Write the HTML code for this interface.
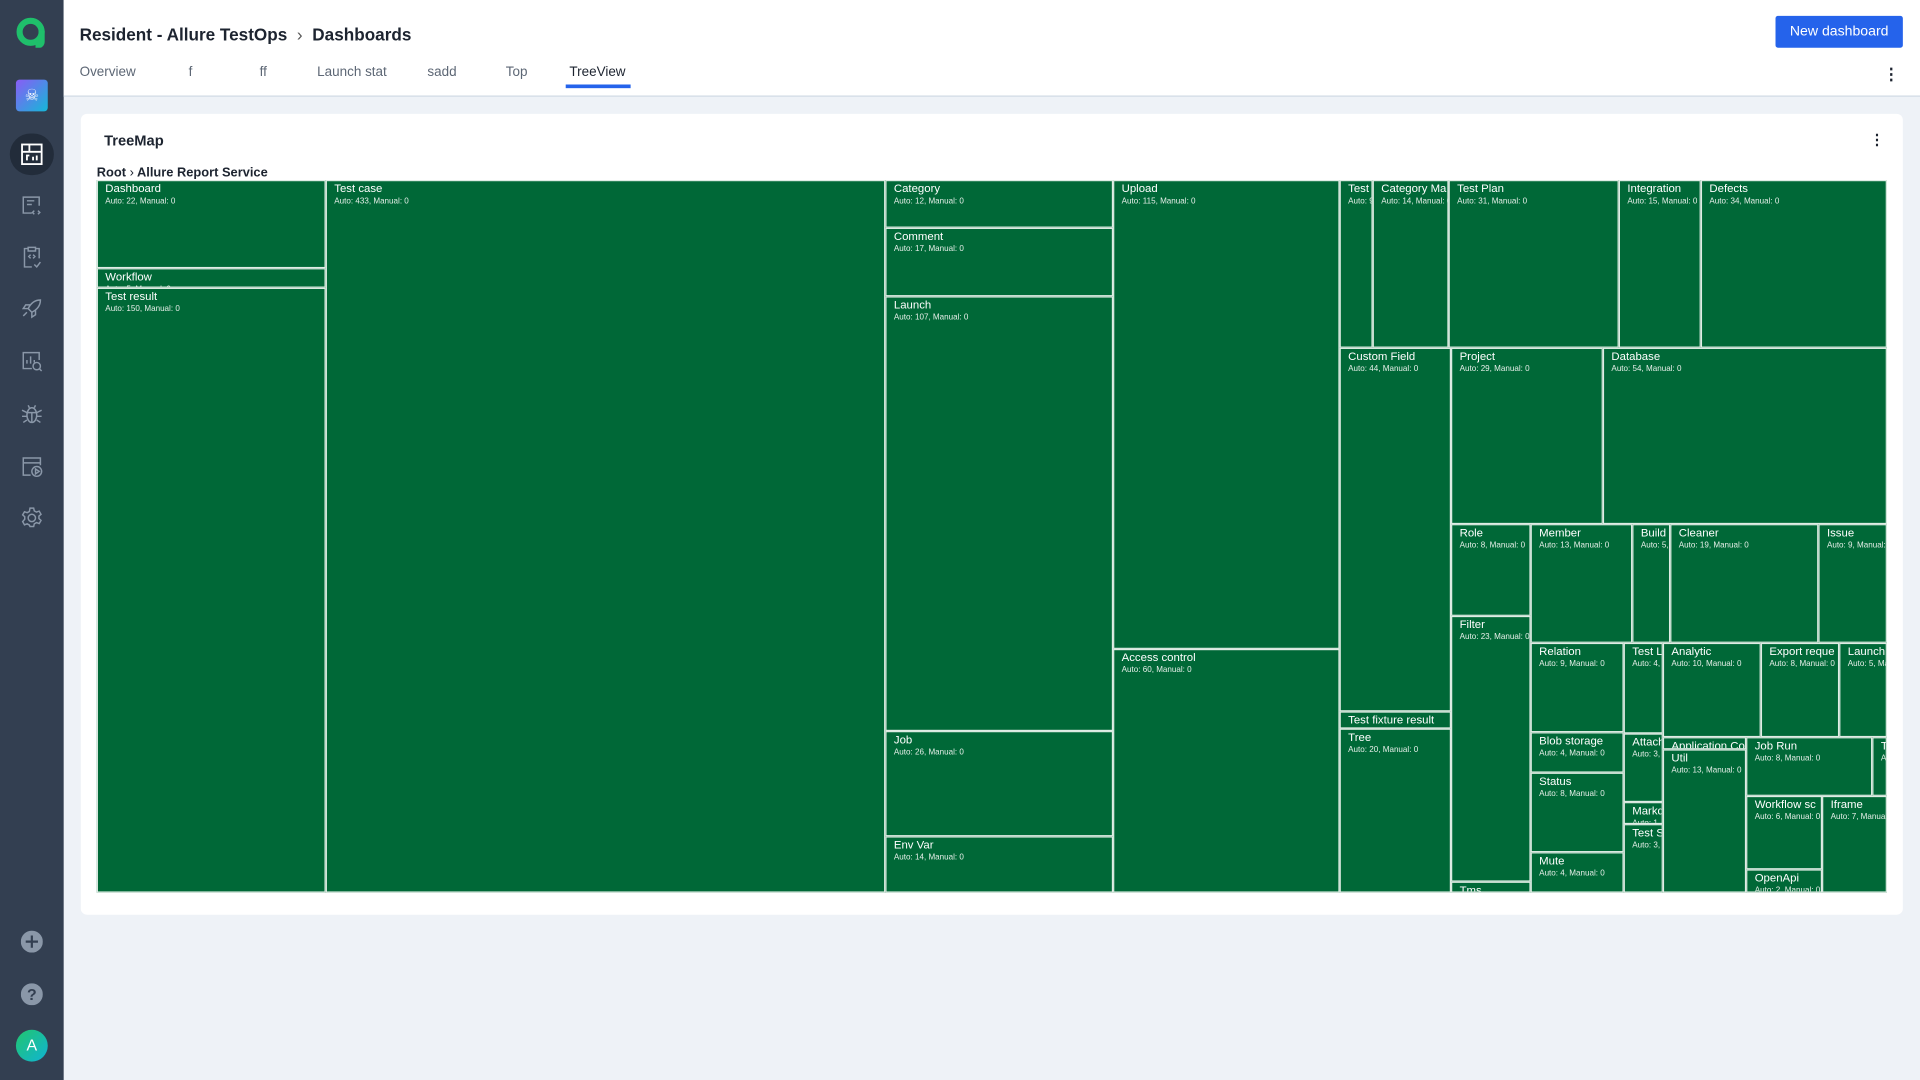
<!DOCTYPE html>
<html><head><meta charset="utf-8"><style>
html,body{margin:0;padding:0;width:1920px;height:1080px;overflow:hidden;background:#eef2f7;font-family:"Liberation Sans",sans-serif}
#root{position:absolute;left:0;top:0;width:1568px;height:882px;transform:scale(1.22449);transform-origin:0 0}
.sb{position:absolute;left:0;top:0;width:52px;height:882px;background:#333f51}
.hdr{position:absolute;left:52px;top:0;width:1516px;height:78px;background:#fff;border-bottom:1px solid #cfd8e3}
.ic{position:absolute;left:16px;width:20px;height:20px}
.r{position:absolute;background:#006837;border:0.85px solid #dfece4;box-sizing:border-box;overflow:hidden;color:#fff;white-space:nowrap;padding:1px 0 0 6px}
.r b{display:block;font-weight:normal;font-size:9.3px;line-height:11px}
.r i{display:block;font-style:normal;font-size:6.6px;line-height:9px;color:#e6efe9}
.tab{position:absolute;top:53px;font-size:11px;color:#5d6775}
</style></head><body><div id="root">
<div class="sb">
 <svg style="position:absolute;left:13px;top:13px" width="26" height="26" viewBox="0 0 26 26"><circle cx="12" cy="13" r="9" fill="none" stroke="#1fbf6b" stroke-width="5"/><path d="M21 12v9a3 3 0 0 1-3 3h-2" fill="none" stroke="#1fbf6b" stroke-width="5"/></svg>
 <div style="position:absolute;left:13px;top:65px;width:26px;height:26px;border-radius:3px;background:linear-gradient(135deg,#8a5cf6,#14b8d8);color:#fff;font-size:13px;text-align:center;line-height:26px">☠</div>
 <div style="position:absolute;left:8px;top:109px;width:36px;height:34px;border-radius:17px;background:#222c3a"></div>
 <svg class="ic" style="top:116px" viewBox="0 0 20 20" fill="none" stroke="#fff" stroke-width="1.5"><rect x="2" y="2" width="16" height="16"/><path d="M2 8h16M8 2v6M6 15v-4h2M11 15v-3M14 15v-4"/></svg>
 <svg class="ic" style="top:158px" viewBox="0 0 20 20" fill="none" stroke="#8a97a8" stroke-width="1.2"><path d="M16 10V3H3v13h7M6 6h6M6 9h4M12 14l-1.5 1.5L12 17M15 14l1.5 1.5L15 17"/></svg>
 <svg class="ic" style="top:200px" viewBox="0 0 20 20" fill="none" stroke="#8a97a8" stroke-width="1.2"><path d="M7 3H4v15h6M13 3h3v8M7 2h6v3H7zM9 8l-1.5 1.5L9 11M11 8l1.5 1.5L11 11M12 16l2 2 3-4"/></svg>
 <svg class="ic" style="top:242px" viewBox="0 0 20 20" fill="none" stroke="#8a97a8" stroke-width="1.2"><path d="M17 3c-5 0-8 3-10 7l3 3c4-2 7-5 7-10zM7 10H3l2-3h4M10 13v4l3-2v-4M3 16l3-3"/></svg>
 <svg class="ic" style="top:285px" viewBox="0 0 20 20" fill="none" stroke="#8a97a8" stroke-width="1.2"><path d="M16 9V3H3v13h7M6 12V9M9 12V6M12 9v2"/><circle cx="14" cy="14" r="3"/><path d="M16 16l2 2"/></svg>
 <svg class="ic" style="top:328px" viewBox="0 0 20 20" fill="none" stroke="#8a97a8" stroke-width="1.2"><ellipse cx="10" cy="11" rx="4" ry="6"/><path d="M6 9h8M10 9v8M2 7l4 2M18 7l-4 2M2 12h4M18 12h-4M3 17l3-2M17 17l-3-2M8 5l-1-2M12 5l1-2"/></svg>
 <svg class="ic" style="top:371px" viewBox="0 0 20 20" fill="none" stroke="#8a97a8" stroke-width="1.2"><path d="M9 17H3V3h14v6M3 7h14"/><circle cx="14" cy="14" r="4"/><path d="M13 12v4l3-2z"/></svg>
 <svg class="ic" style="top:413px" viewBox="0 0 20 20" fill="none" stroke="#8a97a8" stroke-width="1.2"><circle cx="10" cy="10" r="3"/><path d="M8.5 2h3l.5 2.2 1.8 1 2.2-.8 1.5 2.6-1.7 1.5v2l1.7 1.5-1.5 2.6-2.2-.8-1.8 1-.5 2.2h-3L8 15.8l-1.8-1-2.2.8-1.5-2.6L4.2 11V9L2.5 7.5 4 4.9l2.2.8 1.8-1z"/></svg>
 <svg class="ic" style="top:760px;left:17px;width:18px;height:18px" viewBox="0 0 18 18"><circle cx="9" cy="9" r="9" fill="#8a97a8"/><path d="M9 4v10M4 9h10" stroke="#333f51" stroke-width="1.8"/></svg>
 <svg class="ic" style="top:803px;left:17px;width:18px;height:18px" viewBox="0 0 18 18"><circle cx="9" cy="9" r="9" fill="#8a97a8"/><text x="9" y="13.5" text-anchor="middle" font-size="13" font-weight="bold" fill="#333f51" font-family="Liberation Sans">?</text></svg>
 <div style="position:absolute;left:13px;top:841px;width:26px;height:26px;border-radius:13px;background:linear-gradient(135deg,#22c56e,#10b4d4);color:#fff;font-size:13px;text-align:center;line-height:26px">A</div>
</div>
<div class="hdr">
 <div style="position:absolute;left:13px;top:20px;font-size:14px;font-weight:bold;color:#1d2430">Resident - Allure TestOps <span style="font-weight:normal;color:#555;margin:0 4px">›</span> Dashboards</div>
 <div style="position:absolute;left:1398px;top:13px;width:104px;height:26px;background:#2563eb;border-radius:2px;color:#fff;font-size:11.5px;text-align:center;line-height:26px">New dashboard</div>
 <div style="position:absolute;left:1486px;top:58px;font-size:13px;line-height:5px;color:#1d2430;font-weight:bold">⋮</div>
</div>
<div class="tab" style="left:65px">Overview</div>
<div class="tab" style="left:154px">f</div>
<div class="tab" style="left:212px">ff</div>
<div class="tab" style="left:259px">Launch stat</div>
<div class="tab" style="left:349px">sadd</div>
<div class="tab" style="left:413px">Top</div>
<div class="tab" style="left:465px;color:#1d2430">TreeView</div>
<div style="position:absolute;left:462px;top:69px;width:53px;height:3px;background:#2563eb"></div>
<div style="position:absolute;left:66px;top:93px;width:1488px;height:654px;background:#fff;border-radius:5px"></div>
<div style="position:absolute;left:85px;top:108px;font-size:12px;font-weight:bold;color:#1d2430">TreeMap</div>
<div style="position:absolute;left:1527px;top:112px;font-size:12px;line-height:5px;color:#1d2430;font-weight:bold">⋮</div>
<div style="position:absolute;left:79px;top:135px;font-size:10.5px;font-weight:bold;color:#1d2430">Root <span style="font-weight:normal">›</span> Allure Report Service</div>
<div class="r" style="left:79px;top:147px;width:187px;height:72px"><b>Dashboard</b><i>Auto: 22, Manual: 0</i></div>
<div class="r" style="left:79px;top:219px;width:187px;height:16px"><b>Workflow</b><i>Auto: 5, Manual: 0</i></div>
<div class="r" style="left:79px;top:235px;width:187px;height:494px"><b>Test result</b><i>Auto: 150, Manual: 0</i></div>
<div class="r" style="left:266px;top:147px;width:457px;height:582px"><b>Test case</b><i>Auto: 433, Manual: 0</i></div>
<div class="r" style="left:723px;top:147px;width:186px;height:39px"><b>Category</b><i>Auto: 12, Manual: 0</i></div>
<div class="r" style="left:723px;top:186px;width:186px;height:56px"><b>Comment</b><i>Auto: 17, Manual: 0</i></div>
<div class="r" style="left:723px;top:242px;width:186px;height:355px"><b>Launch</b><i>Auto: 107, Manual: 0</i></div>
<div class="r" style="left:723px;top:597px;width:186px;height:86px"><b>Job</b><i>Auto: 26, Manual: 0</i></div>
<div class="r" style="left:723px;top:683px;width:186px;height:46px"><b>Env Var</b><i>Auto: 14, Manual: 0</i></div>
<div class="r" style="left:909px;top:147px;width:185px;height:383px"><b>Upload</b><i>Auto: 115, Manual: 0</i></div>
<div class="r" style="left:909px;top:530px;width:185px;height:199px"><b>Access control</b><i>Auto: 60, Manual: 0</i></div>
<div class="r" style="left:1094px;top:147px;width:27px;height:137px"><b>Test</b><i>Auto: 9, Manual: 0</i></div>
<div class="r" style="left:1121px;top:147px;width:62px;height:137px"><b>Category Ma</b><i>Auto: 14, Manual: 0</i></div>
<div class="r" style="left:1183px;top:147px;width:139px;height:137px"><b>Test Plan</b><i>Auto: 31, Manual: 0</i></div>
<div class="r" style="left:1322px;top:147px;width:67px;height:137px"><b>Integration</b><i>Auto: 15, Manual: 0</i></div>
<div class="r" style="left:1389px;top:147px;width:152px;height:137px"><b>Defects</b><i>Auto: 34, Manual: 0</i></div>
<div class="r" style="left:1094px;top:284px;width:91px;height:297px"><b>Custom Field</b><i>Auto: 44, Manual: 0</i></div>
<div class="r" style="left:1094px;top:581px;width:91px;height:14px"><b>Test fixture result</b></div>
<div class="r" style="left:1094px;top:595px;width:91px;height:134px"><b>Tree</b><i>Auto: 20, Manual: 0</i></div>
<div class="r" style="left:1185px;top:284px;width:124px;height:144px"><b>Project</b><i>Auto: 29, Manual: 0</i></div>
<div class="r" style="left:1309px;top:284px;width:232px;height:144px"><b>Database</b><i>Auto: 54, Manual: 0</i></div>
<div class="r" style="left:1185px;top:428px;width:65px;height:75px"><b>Role</b><i>Auto: 8, Manual: 0</i></div>
<div class="r" style="left:1185px;top:503px;width:65px;height:217px"><b>Filter</b><i>Auto: 23, Manual: 0</i></div>
<div class="r" style="left:1185px;top:720px;width:65px;height:9px"><b>Tms</b></div>
<div class="r" style="left:1250px;top:428px;width:83px;height:97px"><b>Member</b><i>Auto: 13, Manual: 0</i></div>
<div class="r" style="left:1333px;top:428px;width:31px;height:97px"><b>Build</b><i>Auto: 5, Manual: 0</i></div>
<div class="r" style="left:1364px;top:428px;width:121px;height:97px"><b>Cleaner</b><i>Auto: 19, Manual: 0</i></div>
<div class="r" style="left:1485px;top:428px;width:56px;height:97px"><b>Issue</b><i>Auto: 9, Manual: 0</i></div>
<div class="r" style="left:1250px;top:525px;width:76px;height:73px"><b>Relation</b><i>Auto: 9, Manual: 0</i></div>
<div class="r" style="left:1250px;top:598px;width:76px;height:33px"><b>Blob storage</b><i>Auto: 4, Manual: 0</i></div>
<div class="r" style="left:1250px;top:631px;width:76px;height:65px"><b>Status</b><i>Auto: 8, Manual: 0</i></div>
<div class="r" style="left:1250px;top:696px;width:76px;height:33px"><b>Mute</b><i>Auto: 4, Manual: 0</i></div>
<div class="r" style="left:1326px;top:525px;width:32px;height:74px"><b>Test L</b><i>Auto: 4, Manual: 0</i></div>
<div class="r" style="left:1326px;top:599px;width:32px;height:56px"><b>Attach</b><i>Auto: 3, Manual: 0</i></div>
<div class="r" style="left:1326px;top:655px;width:32px;height:18px"><b>Markd</b><i>Auto: 1, Manual: 0</i></div>
<div class="r" style="left:1326px;top:673px;width:32px;height:56px"><b>Test S</b><i>Auto: 3, Manual: 0</i></div>
<div class="r" style="left:1358px;top:525px;width:80px;height:77px"><b>Analytic</b><i>Auto: 10, Manual: 0</i></div>
<div class="r" style="left:1438px;top:525px;width:64px;height:77px"><b>Export reque</b><i>Auto: 8, Manual: 0</i></div>
<div class="r" style="left:1502px;top:525px;width:39px;height:77px"><b>Launch</b><i>Auto: 5, Manual: 0</i></div>
<div class="r" style="left:1358px;top:602px;width:68px;height:10px"><b>Application Co</b></div>
<div class="r" style="left:1358px;top:612px;width:68px;height:117px"><b>Util</b><i>Auto: 13, Manual: 0</i></div>
<div class="r" style="left:1426px;top:602px;width:103px;height:48px"><b>Job Run</b><i>Auto: 8, Manual: 0</i></div>
<div class="r" style="left:1529px;top:602px;width:12px;height:48px"><b>Te</b><i>Au</i></div>
<div class="r" style="left:1426px;top:650px;width:62px;height:60px"><b>Workflow sc</b><i>Auto: 6, Manual: 0</i></div>
<div class="r" style="left:1426px;top:710px;width:62px;height:19px"><b>OpenApi</b><i>Auto: 2, Manual: 0</i></div>
<div class="r" style="left:1488px;top:650px;width:53px;height:79px"><b>Iframe</b><i>Auto: 7, Manual: 0</i></div>
</div></body></html>
